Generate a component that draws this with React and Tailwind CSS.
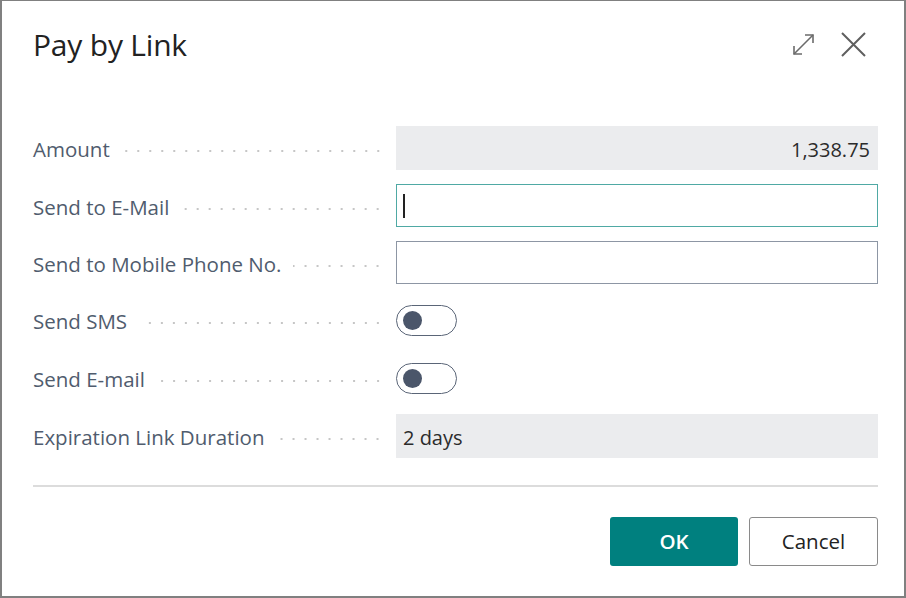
import React from 'react';

const font = { fontFamily: '"Open Sans", "Noto Sans", Arial, sans-serif' };

const Leader = () => (
  <div className="flex-1 h-[4px] ml-3 -mr-[5px] mt-[3px] bg-[radial-gradient(circle,#c6c6c6_1px,transparent_1.4px)] bg-[length:12px_4px] bg-repeat-x bg-right" />
);

const Toggle = () => (
  <div className="w-[61px] h-[31px] rounded-full border-[1.5px] border-[#5a6577] flex items-center pl-[6px]">
    <div className="w-[19px] h-[19px] rounded-full bg-[#4b566a]" />
  </div>
);

const rows = [
  { label: 'Amount', kind: 'readonly-right', value: '1,338.75' },
  { label: 'Send to E-Mail', kind: 'focused' },
  { label: 'Send to Mobile Phone No.', kind: 'input' },
  { label: 'Send SMS', kind: 'toggle' },
  { label: 'Send E-mail', kind: 'toggle' },
  { label: 'Expiration Link Duration', kind: 'readonly', value: '2 days' },
];

const Field = ({ row }) => {
  if (row.kind === 'readonly-right') {
    return (
      <div className="h-[44px] bg-[#ebecee] flex items-center justify-end pr-[8px] pt-[3px] text-[20px] text-[#2b2b2b]">
        {row.value}
      </div>
    );
  }
  if (row.kind === 'readonly') {
    return (
      <div className="h-[44px] bg-[#ebecee] flex items-center pl-[7px] pt-[3px] text-[20px] text-[#2b2b2b]">
        {row.value}
      </div>
    );
  }
  if (row.kind === 'focused') {
    return (
      <div className="h-[43px] border-[1.5px] border-[#4fa9a4] flex items-center pl-[6px]">
        <div className="w-[1.5px] h-[24px] bg-[#222]" />
      </div>
    );
  }
  if (row.kind === 'input') {
    return <div className="h-[43px] border border-[#8d96a4]" />;
  }
  return (
    <div className="h-[44px] flex items-center">
      <Toggle />
    </div>
  );
};

export default function App() {
  return (
    <div style={font} className="w-[906px] h-[598px] bg-white border-2 border-t border-[#808080] flex flex-col">
      {/* Header */}
      <div className="flex justify-between pl-[31px] pr-[38px] pt-[25px] h-[90px] items-start">
        <h1 className="text-[30px] leading-[38px] text-[#222] tracking-[-0.2px]">Pay by Link</h1>
        <div className="flex items-center gap-[26px] mt-[6px]">
          <svg width="23" height="23" viewBox="0 0 23 23" fill="none" stroke="#6b6b6b" strokeWidth="1.6">
            <path d="M2 21 L21 2" />
            <path d="M13 2 H21 V10" />
            <path d="M2 13 V21 H10" />
          </svg>
          <svg width="25" height="25" viewBox="0 0 25 25" fill="none" stroke="#5f5f5f" strokeWidth="2">
            <path d="M1 1 L24 24 M24 1 L1 24" />
          </svg>
        </div>
      </div>

      {/* Form */}
      <div className="pl-[31px] pr-[26px] pt-[35px] flex flex-col gap-[14px]">
        {rows.map((row) => (
          <div key={row.label} className="grid grid-cols-[346px_1fr] gap-[17px] items-center">
            <div className="flex items-center pt-[3px]">
              <span className="text-[20.5px] text-[#505c6e] whitespace-nowrap">{row.label}</span>
              <Leader />
            </div>
            <Field row={row} />
          </div>
        ))}
      </div>

      {/* Divider */}
      <div className="ml-[31px] mr-[26px] mt-[27px] h-[2px] bg-[#dcdcdc]" />

      {/* Buttons */}
      <div className="flex justify-end gap-[11px] pr-[26px] pt-[30px]">
        <button className="w-[128px] h-[49px] rounded-[3px] bg-[#00807f] text-white text-[20.5px] font-semibold">
          OK
        </button>
        <button className="w-[129px] h-[49px] rounded-[3px] border border-[#8a8a8a] bg-white text-[#222] text-[20.5px]">
          Cancel
        </button>
      </div>
    </div>
  );
}
